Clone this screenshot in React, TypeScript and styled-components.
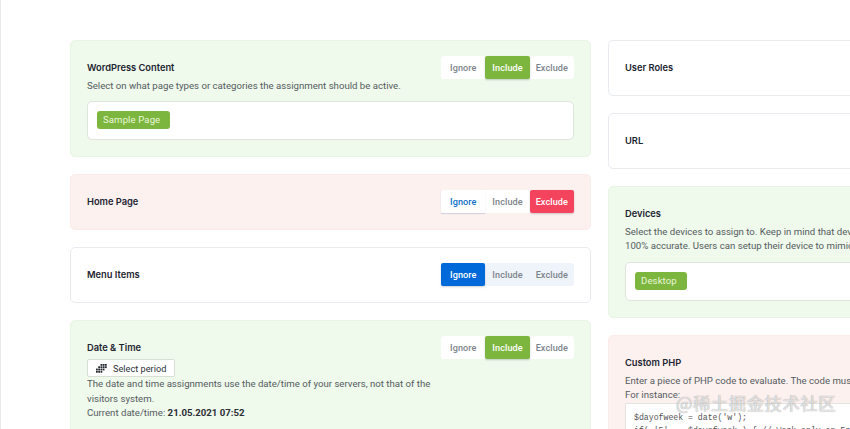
import React from "react";
import styled, { createGlobalStyle } from "styled-components";

type Tone = "plain" | "include" | "exclude";
type Choice = "ignore" | "include" | "exclude";

const GlobalStyle = createGlobalStyle`
  html, body {
    margin: 0;
    padding: 0;
    background: #fff;
    overflow: hidden;
  }
  body {
    font-family: Roboto, "Liberation Sans", sans-serif;
  }
`;

const Page = styled.div`
  position: relative;
  box-sizing: border-box;
  width: 850px;
  height: 429px;
  overflow: hidden;
  border-left: 1px solid #e9e9ee;
  padding: 40px 0 0 69px;
  display: grid;
  grid-template-columns: 521px 521px;
  column-gap: 17px;
  align-items: start;
`;

const Column = styled.div`
  display: flex;
  flex-direction: column;
  gap: 17px;
`;

const toneStyles: Record<Tone, string> = {
  plain: "background: #fff; border-color: #e8ebef;",
  include: "background: #eff9ec; border-color: #e8f4e4;",
  exclude: "background: #fdf1ef; border-color: #fbece9;",
};

const Card = styled.section<{ $tone: Tone }>`
  box-sizing: border-box;
  border: 1px solid;
  border-radius: 5px;
  padding: 15px 16px 16px;
  ${(p) => toneStyles[p.$tone]}
`;

const Header = styled.div`
  display: flex;
  justify-content: space-between;
  align-items: flex-start;
`;

const Intro = styled.div`
  max-width: 352px;
`;

const Title = styled.h3`
  margin: 0;
  height: 23px;
  line-height: 24px;
  font-family: Inter, Roboto, sans-serif;
  font-size: 9.3px;
  font-weight: 600;
  color: #1c2430;
`;

const Text = styled.p`
  margin: 0;
  font-size: 9.65px;
  line-height: 14.3px;
  color: #555c60;
`;

const Strong = styled.strong`
  font-weight: 700;
  color: #2a2f35;
`;

const Segments = styled.div<{ $tinted?: boolean }>`
  display: flex;
  flex: none;
  height: 23px;
  border-radius: 3px;
  background: ${(p) => (p.$tinted ? "#eff4fb" : "#fff")};
`;

const activeColors: Record<Choice, string> = {
  ignore: "#0069d9",
  include: "#7cb63e",
  exclude: "#f4435c",
};

const Segment = styled.span<{ $on: Choice | null; $blueText?: boolean }>`
  display: flex;
  align-items: center;
  justify-content: center;
  width: 44.3px;
  border-radius: ${(p) => (p.$on ? "2px" : "0")};
  font-size: 9.1px;
  font-weight: 500;
  letter-spacing: 0.1px;
  color: ${(p) => (p.$on ? "#fff" : p.$blueText ? "#0f6fc6" : "#7d838b")};
  background: ${(p) => (p.$on ? activeColors[p.$on] : "transparent")};
  box-shadow: ${(p) =>
    p.$on
      ? "0 1px 2px rgba(60, 70, 80, 0.25)"
      : p.$blueText
        ? "0 1px 1px rgba(40, 90, 150, 0.18)"
        : "none"};
`;

const Field = styled.div`
  box-sizing: border-box;
  margin-top: 8px;
  height: 39px;
  padding: 9px;
  background: #fff;
  border: 1px solid #dfe5dc;
  border-radius: 5px;
  display: flex;
  align-items: flex-start;
`;

const Tag = styled.span`
  height: 18px;
  padding: 0 10px 0 6px;
  line-height: 18px;
  border-radius: 3px;
  background: #7cb63e;
  color: #eaf6da;
  font-size: 9.6px;
  letter-spacing: 0.1px;
`;

const PeriodButton = styled.button`
  box-sizing: border-box;
  display: flex;
  align-items: center;
  gap: 6px;
  width: 88px;
  height: 18px;
  padding: 0 8px;
  background: #fff;
  border: 1px solid #d9ded6;
  border-radius: 2px;
  font-family: Roboto, sans-serif;
  font-size: 9.2px;
  color: #2d3238;
  white-space: nowrap;

  svg {
    flex: none;
  }
`;

const CodeBox = styled.pre`
  margin: 1px 0 0;
  padding: 7px 8px;
  background: #fff;
  border: 1px solid #e6e2e0;
  font-family: "Liberation Mono", monospace;
  font-size: 8.2px;
  line-height: 13px;
  color: #555;
`;

const Watermark = styled.div`
  position: absolute;
  left: 675px;
  top: 393px;
  font-family: "Noto Sans CJK SC", sans-serif;
  font-size: 17.5px;
  line-height: 20px;
  letter-spacing: 0.4px;
  color: rgba(255, 255, 255, 0.72);
  text-shadow: 0 0 1px rgba(90, 90, 90, 0.75);
  white-space: nowrap;
`;

const CalendarGlyph = () => (
  <svg width="11" height="9" viewBox="0 0 11 9" fill="#23282e" aria-hidden="true">
    {[
      [4.5, 0], [6.7, 0], [8.9, 0],
      [2.2, 2.3], [4.5, 2.3], [6.7, 2.3], [8.9, 2.3],
      [0, 4.6], [2.2, 4.6], [4.5, 4.6], [6.7, 4.6],
      [0, 6.9], [2.2, 6.9], [4.5, 6.9],
    ].map(([x, y]) => (
      <rect key={`${x}-${y}`} x={x} y={y} width="1.8" height="1.8" />
    ))}
  </svg>
);

const Switch = ({ value, tinted, blueIgnore }: { value: Choice; tinted?: boolean; blueIgnore?: boolean }) => (
  <Segments $tinted={tinted}>
    <Segment $on={value === "ignore" ? "ignore" : null} $blueText={blueIgnore}>Ignore</Segment>
    <Segment $on={value === "include" ? "include" : null}>Include</Segment>
    <Segment $on={value === "exclude" ? "exclude" : null}>Exclude</Segment>
  </Segments>
);

export default function App() {
  return (
    <>
      <GlobalStyle />
      <Page>
        <Column>
          <Card $tone="include">
            <Header>
              <Intro>
                <Title>WordPress Content</Title>
                <Text>Select on what page types or categories the assignment should be active.</Text>
              </Intro>
              <Switch value="include" />
            </Header>
            <Field>
              <Tag>Sample Page</Tag>
            </Field>
          </Card>

          <Card $tone="exclude">
            <Header>
              <Title>Home Page</Title>
              <Switch value="exclude" blueIgnore />
            </Header>
          </Card>

          <Card $tone="plain">
            <Header>
              <Title>Menu Items</Title>
              <Switch value="ignore" tinted />
            </Header>
          </Card>

          <Card $tone="include">
            <Header>
              <Intro>
                <Title>Date &amp; Time</Title>
                <PeriodButton>
                  <CalendarGlyph />
                  Select period
                </PeriodButton>
                <Text>
                  The date and time assignments use the date/time of your servers, not that of the visitors system.
                  <br />
                  Current date/time: <Strong>21.05.2021 07:52</Strong>
                </Text>
              </Intro>
              <Switch value="include" />
            </Header>
          </Card>
        </Column>

        <Column>
          <Card $tone="plain">
            <Header>
              <Title>User Roles</Title>
              <Switch value="ignore" tinted />
            </Header>
          </Card>

          <Card $tone="plain">
            <Header>
              <Title>URL</Title>
              <Switch value="ignore" tinted />
            </Header>
          </Card>

          <Card $tone="include">
            <Header>
              <Intro>
                <Title>Devices</Title>
                <Text>
                  Select the devices to assign to. Keep in mind that device detection is not always
                  <br />
                  100% accurate. Users can setup their device to mimic other devices.
                </Text>
              </Intro>
              <Switch value="include" />
            </Header>
            <Field>
              <Tag>Desktop</Tag>
            </Field>
          </Card>

          <Card $tone="exclude">
            <Header>
              <Intro>
                <Title>Custom PHP</Title>
                <Text>
                  Enter a piece of PHP code to evaluate. The code must return true or false.
                  <br />
                  For instance:
                </Text>
              </Intro>
              <Switch value="exclude" blueIgnore />
            </Header>
            <CodeBox>{`$dayofweek = date('w');
if( '5' == $dayofweek ) { // Work only on Fridays
  return true;
}`}</CodeBox>
          </Card>
        </Column>
        <Watermark>@稀土掘金技术社区</Watermark>
      </Page>
    </>
  );
}
